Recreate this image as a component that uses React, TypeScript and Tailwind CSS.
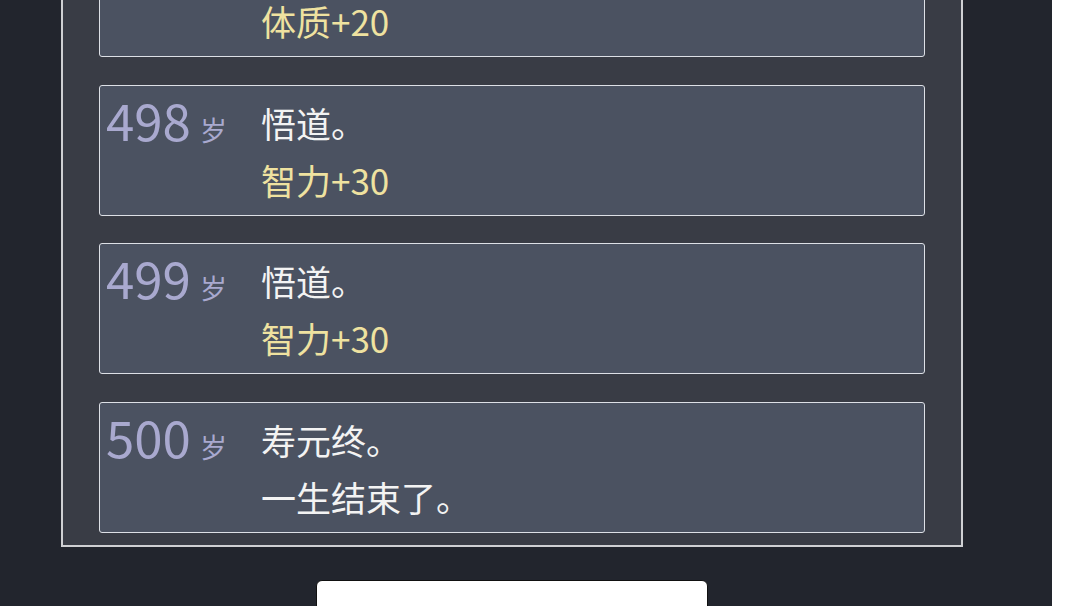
import React from 'react';

interface LifeEvent {
  age: number;
  lines: { text: string; kind: 'event' | 'effect' }[];
}

const events: LifeEvent[] = [
  {
    age: 497,
    lines: [
      { text: '炼体。', kind: 'event' },
      { text: '体质+20', kind: 'effect' },
    ],
  },
  {
    age: 498,
    lines: [
      { text: '悟道。', kind: 'event' },
      { text: '智力+30', kind: 'effect' },
    ],
  },
  {
    age: 499,
    lines: [
      { text: '悟道。', kind: 'event' },
      { text: '智力+30', kind: 'effect' },
    ],
  },
  {
    age: 500,
    lines: [
      { text: '寿元终。', kind: 'event' },
      { text: '一生结束了。', kind: 'event' },
    ],
  },
];

const font = { fontFamily: '"Noto Sans CJK SC", "Noto Sans", sans-serif' };

const EventCard: React.FC<{ item: LifeEvent }> = ({ item }) => (
  <div className="flex rounded-[3px] border border-[#dde0e6] bg-[#4b5261] pt-[8px] pb-[7px] pl-[6px]">
    <div className="flex h-[57px] w-[155px] shrink-0 items-baseline">
      <span className="text-[51px] leading-[50px] text-[#a9a9cf]">{item.age}</span>
      <span className="ml-[9px] text-[27px] leading-none text-[#a9a9cf]">岁</span>
    </div>
    <div className="flex flex-col">
      {item.lines.map((line, i) => (
        <div
          key={i}
          className={
            'text-[35px] leading-[57px] ' +
            (line.kind === 'effect' ? 'text-[#efe2a0]' : 'text-[#f3f3f3]')
          }
        >
          {line.text}
        </div>
      ))}
    </div>
  </div>
);

export default function App() {
  return (
    <div className="flex h-[606px] w-[1080px] overflow-hidden bg-white" style={font}>
      <div className="flex h-full w-[1052px] flex-col items-start bg-[#22252d]">
        <div className="ml-[61px] w-[902px] shrink-0 overflow-hidden border-x-2 border-b-2 border-[#cfd0d3] bg-[#393c45]">
          <div className="-mt-[74px] flex flex-col gap-[27.5px] px-[36px] pb-[12px]">
            {events.map((e) => (
              <EventCard key={e.age} item={e} />
            ))}
          </div>
        </div>
        <button className="mt-[33px] ml-[316px] h-[60px] w-[392px] shrink-0 rounded-[6px] border border-[#111] bg-white" />
      </div>
    </div>
  );
}
